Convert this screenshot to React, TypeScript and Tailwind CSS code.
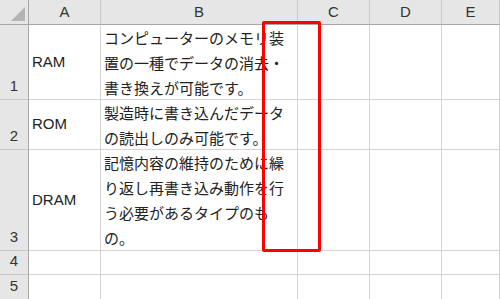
const cols = ["A", "B", "C", "D", "E"];

type Row = { n: number; h: string; a: string; b: string[] };

const rows: Row[] = [
  { n: 1, h: "h-[75px]", a: "RAM", b: ["コンピューターのメモリ装", "置の一種でデータの消去・", "書き換えが可能です。"] },
  { n: 2, h: "h-[50px]", a: "ROM", b: ["製造時に書き込んだデータ", "の読出しのみ可能です。"] },
  { n: 3, h: "h-[101px]", a: "DRAM", b: ["記憶内容の維持のために繰", "り返し再書き込み動作を行", "う必要があるタイプのも", "の。"] },
  { n: 4, h: "h-[24px]", a: "", b: [] },
  { n: 5, h: "h-[25px]", a: "", b: [] },
];

const latin = "font-['Liberation_Sans','Noto_Sans_CJK_JP',sans-serif]";
const jp = "font-['Noto_Sans_CJK_JP',sans-serif]";

export default function App() {
  return (
    <div className="relative h-[299px] w-[500px] overflow-hidden bg-white text-[#222]">
      <div className="grid grid-cols-[29px_72px_197px_72px_72px_58px]">
        {/* header row */}
        <div className="relative h-[25px] border-b border-r border-b-[#a6a6a6] border-r-[#a6a6a6] bg-[#e6e6e6]">
          <svg className="absolute right-[3px] bottom-[3px]" width="14" height="14" viewBox="0 0 14 14">
            <polygon points="14,0 14,14 0,14" fill="#b4b4b4" />
          </svg>
        </div>
        {cols.map((c) => (
          <div
            key={c}
            className={`flex h-[25px] items-center justify-center border-b border-r border-b-[#a6a6a6] border-r-[#c8c8c8] bg-[#e6e6e6] text-[15px] text-[#333] ${latin}`}
          >
            {c}
          </div>
        ))}

        {rows.map((r) => (
          <div key={r.n} className="contents">
            <div
              className={`flex ${r.h} items-end justify-center border-b border-r border-b-[#c8c8c8] border-r-[#a6a6a6] bg-[#e6e6e6] pb-[2px] text-[15px] text-[#333] ${latin}`}
            >
              {r.n}
            </div>
            <div className={`flex ${r.h} items-center border-b border-r border-[#d4d4d4] pl-[3px] text-[15px] ${latin}`}>
              {r.a}
            </div>
            <div className={`${r.h} border-b border-r border-[#d4d4d4] pl-[3px] text-[15px] leading-[25px] ${jp}`}>
              {r.b.map((l) => (
                <div key={l} className="whitespace-nowrap">{l}</div>
              ))}
            </div>
            <div className={`${r.h} border-b border-r border-[#d4d4d4]`} />
            <div className={`${r.h} border-b border-r border-[#d4d4d4]`} />
            <div className={`${r.h} border-b border-r border-[#d4d4d4]`} />
          </div>
        ))}
      </div>

      <div className="pointer-events-none absolute left-[262px] top-[21px] h-[231px] w-[59px] rounded-[2px] border-[3px] border-[#ff0000]" />
    </div>
  );
}
